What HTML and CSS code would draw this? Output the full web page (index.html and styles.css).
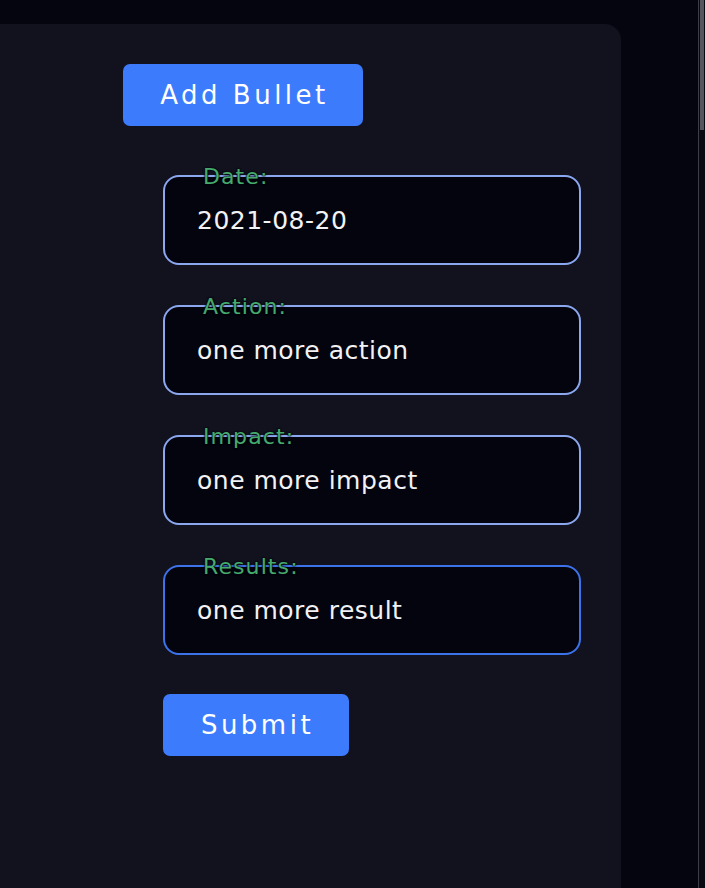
FILE: index.html
```html
<!DOCTYPE html>
<html>
<head>
<meta charset="utf-8">
<link rel="stylesheet" href="styles.css">
</head>
<body>
<div class="page">
  <main class="main">
    <section class="card">
      <button class="btn btn-add">Add Bullet</button>
      <form class="form">
        <div class="field">
          <label class="label">Date:</label>
          <div class="input">2021-08-20</div>
        </div>
        <div class="field">
          <label class="label">Action:</label>
          <div class="input">one more action</div>
        </div>
        <div class="field">
          <label class="label">Impact:</label>
          <div class="input">one more impact</div>
        </div>
        <div class="field">
          <label class="label">Results:</label>
          <div class="input input-focus">one more result</div>
        </div>
        <div class="actions">
          <button type="button" class="btn btn-submit">Submit</button>
        </div>
      </form>
    </section>
  </main>
  <aside class="gutter"><div class="thumb"></div></aside>
</div>
</body>
</html>
```
FILE: styles.css
```css
html, body {
  margin: 0;
  padding: 0;
  height: 100%;
  background: #05050f;
  font-family: "DejaVu Sans", sans-serif;
  overflow: hidden;
}
.page {
  display: flex;
  height: 888px;
}
.main {
  flex: 1;
  padding-top: 24px;
}
.card {
  width: 621px;
  height: 864px;
  box-sizing: border-box;
  background: #12121e;
  border-radius: 0 16px 0 0;
  padding: 40px 0 0 123px;
}
.btn {
  background: #3d7bfd;
  color: #fff;
  border: none;
  border-radius: 7px;
  font-family: inherit;
  font-size: 26px;
  letter-spacing: 3.5px;
  padding: 0 0 0 3px;
  cursor: pointer;
}
.btn-add {
  width: 240px;
  height: 62px;
}
.form {
  margin: 49px 0 0 40px;
  display: flex;
  flex-direction: column;
  gap: 40px;
}
.field {
  position: relative;
  width: 418px;
}
.label {
  position: absolute;
  left: 40px;
  top: -10px;
  color: #45aa6c;
  font-size: 22px;
  letter-spacing: 1.1px;
  line-height: 24px;
  text-shadow: 0 0 2px #05050f, 0 0 2px #05050f, 0 0 1px #05050f;
}
.input {
  height: 90px;
  box-sizing: border-box;
  border: 2px solid #8aa7f0;
  border-radius: 16px;
  background: #04040f;
  color: #f2f2f5;
  font-size: 25px;
  letter-spacing: 0.5px;
  display: flex;
  align-items: center;
  padding: 0 32px 0 32px;
}
.input-focus {
  border-color: #3c72ea;
}
.actions {
  margin-top: -1px;
}
.btn-submit {
  width: 186px;
  height: 62px;
}
.gutter {
  width: 6px;
  border-left: 1px solid #3c3c46;
  background: #0a0a12;
  flex: none;
}
.thumb {
  height: 130px;
  margin-left: 1px;
  width: 4px;
  background: #56565f;
}
```
